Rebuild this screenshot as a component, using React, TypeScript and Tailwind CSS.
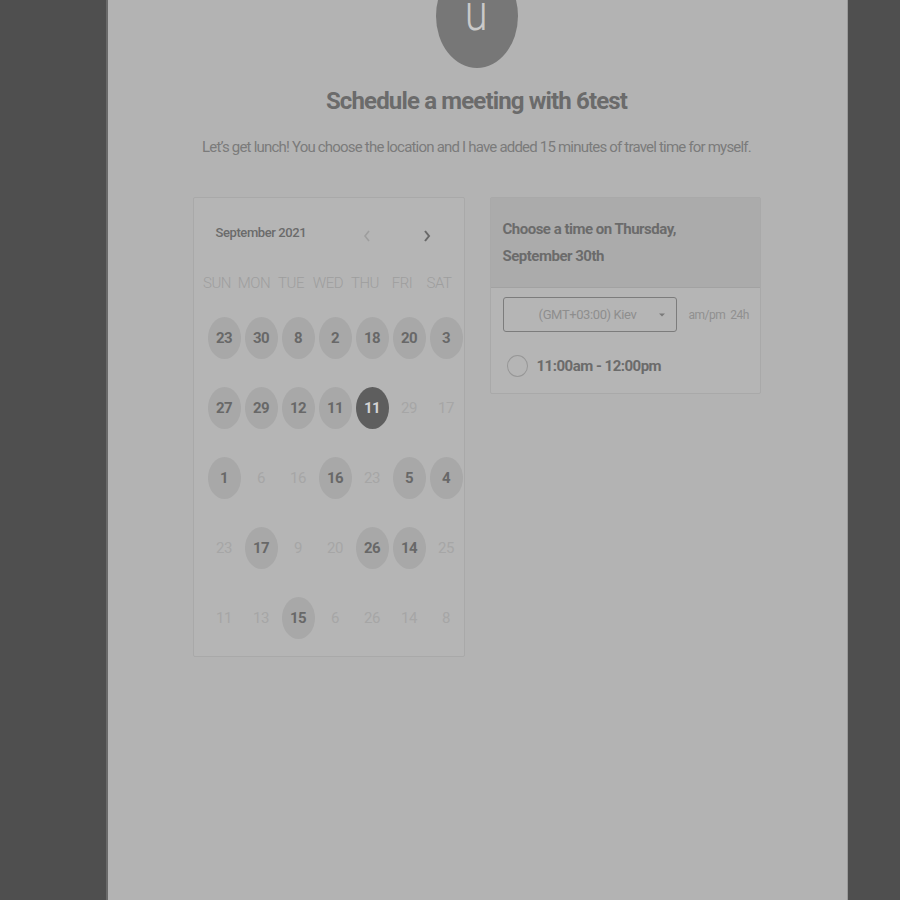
import React from "react";

type Day = { n: number; a?: boolean; s?: boolean };

const rows: Day[][] = [
  [{ n: 23, a: true }, { n: 30, a: true }, { n: 8, a: true }, { n: 2, a: true }, { n: 18, a: true }, { n: 20, a: true }, { n: 3, a: true }],
  [{ n: 27, a: true }, { n: 29, a: true }, { n: 12, a: true }, { n: 11, a: true }, { n: 11, s: true }, { n: 29 }, { n: 17 }],
  [{ n: 1, a: true }, { n: 6 }, { n: 16 }, { n: 16, a: true }, { n: 23 }, { n: 5, a: true }, { n: 4, a: true }],
  [{ n: 23 }, { n: 17, a: true }, { n: 9 }, { n: 20 }, { n: 26, a: true }, { n: 14, a: true }, { n: 25 }],
  [{ n: 11 }, { n: 13 }, { n: 15, a: true }, { n: 6 }, { n: 26 }, { n: 14 }, { n: 8 }],
];

const days = ["SUN", "MON", "TUE", "WED", "THU", "FRI", "SAT"];

export default function App() {
  return (
    <div
      className="w-[900px] h-[900px] bg-[#4f4f4f] overflow-hidden"
      style={{ fontFamily: "Roboto, 'Liberation Sans', sans-serif" }}
    >
      <div className="ml-[106px] w-[742px] h-[900px] bg-[#b3b3b3] border-l-2 border-l-[#6a6a6a] border-r border-r-[#9a9a9a] pr-[2px] flex flex-col items-center">
        {/* avatar */}
        <div className="-mt-[36px] w-[82px] h-[104px] rounded-[50%] bg-[#777777] flex items-center justify-center">
          <span className="text-[52px] font-light text-[#c9c9c9] leading-none scale-x-[0.8] mt-[-6px]">u</span>
        </div>
        <h1 className="mt-[17px] text-[24px] leading-[32px] font-bold text-[#6b6b6b] tracking-[-0.85px]">
          Schedule a meeting with 6test
        </h1>
        <p className="mt-[20px] text-[15px] leading-[20px] text-[#7b7b7b] tracking-[-0.8px]">
          Let’s get lunch! You choose the location and I have added 15 minutes of travel time for myself.
        </p>

        <div className="mt-[40px] flex gap-[25px] items-start">
          {/* calendar */}
          <div className="w-[272px] h-[460px] bg-[#b5b5b5] border border-[#a9a9a9] rounded-[2px]">
            <div className="flex items-center h-[30px] mt-[20px] pl-[22px]">
              <span className="text-[13px] font-medium text-[#6b6b6b] tracking-[-0.4px]">September 2021</span>
              <svg className="ml-[56px] mt-[6px]" width="10" height="16" viewBox="0 0 10 16">
                <path d="M7 3 L3 8 L7 13" fill="none" stroke="#9e9e9e" strokeWidth="1.6" />
              </svg>
              <svg className="ml-[50px] mt-[6px]" width="10" height="16" viewBox="0 0 10 16">
                <path d="M3 3 L7 8 L3 13" fill="none" stroke="#686868" strokeWidth="2" />
              </svg>
            </div>
            <div className="flex pl-[5px] mt-[23px] h-[24px] items-center">
              {days.map((d) => (
                <div key={d} className="w-[37px] shrink-0 text-center text-[15px] font-light text-[#9e9e9e] tracking-[-0.5px]">
                  {d}
                </div>
              ))}
            </div>
            <div className="pl-[12px] mt-[8px]">
              {rows.map((r, i) => (
                <div key={i} className="flex h-[70px] items-center">
                  {r.map((d, j) => (
                    <div key={j} className="w-[37px] shrink-0 flex justify-center">
                      <div
                        className={
                          "w-[33px] h-[42px] rounded-[50%] flex items-center justify-center text-[15px] tracking-[-0.5px] " +
                          (d.s
                            ? "bg-[#5e5e5e] text-[#d4d4d4] font-bold"
                            : d.a
                            ? "bg-[#a8a8a8] text-[#686868] font-bold"
                            : "text-[#a6a6a6]")
                        }
                      >
                        {d.n}
                      </div>
                    </div>
                  ))}
                </div>
              ))}
            </div>
          </div>

          {/* time card */}
          <div className="w-[271px] bg-[#b5b5b5] border border-[#a9a9a9] rounded-[2px]">
            <div className="h-[90px] bg-[#ababab] border-b border-[#a2a2a2] pl-[12px] pt-[18px]">
              <div className="text-[15px] leading-[27px] font-bold text-[#6b6b6b] tracking-[-0.5px]">
                Choose a time on Thursday,
              </div>
              <div className="text-[15px] leading-[27px] font-bold text-[#6b6b6b] tracking-[-0.5px]">
                September 30th
              </div>
            </div>
            <div className="flex items-center pl-[12px] mt-[9px]">
              <div className="w-[174px] h-[35px] border border-[#7c7c7c] rounded-[3px] flex items-center">
                <span className="flex-1 text-center text-[13px] text-[#8e8e8e] tracking-[-0.4px] pl-[14px]">
                  (GMT+03:00) Kiev
                </span>
                <svg className="mr-[10px]" width="8" height="6" viewBox="0 0 8 6">
                  <path d="M1 1.5 L4 4.5 L7 1.5 Z" fill="#7a7a7a" />
                </svg>
              </div>
              <span className="ml-[12px] text-[12px] text-[#909090] tracking-[-0.5px]">am/pm</span>
              <span className="ml-[5px] text-[12px] text-[#909090] tracking-[-0.5px]">24h</span>
            </div>
            <div className="flex items-center pl-[16px] h-[52px] mt-[8px] mb-[1px]">
              <div className="w-[21px] h-[22px] rounded-[50%] border-[1.5px] border-[#979797]" />
              <span className="ml-[9px] text-[15px] font-bold text-[#6b6b6b] tracking-[-0.5px]">11:00am - 12:00pm</span>
            </div>
          </div>
        </div>
      </div>
    </div>
  );
}
